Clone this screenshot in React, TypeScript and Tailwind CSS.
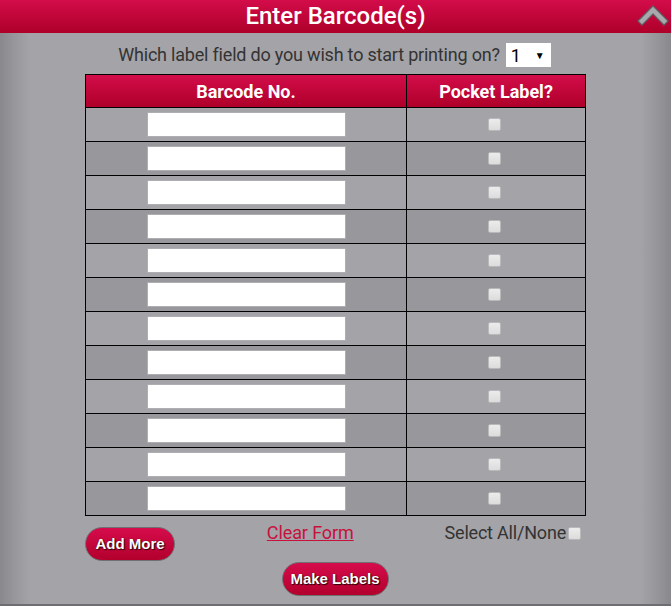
import React from "react";

const rows = Array.from({ length: 12 }, (_, i) => i);

function Check({ className = "" }: { className?: string }) {
  return (
    <span
      className={
        "inline-block w-[13px] h-[13px] rounded-[2px] border border-[#b9b9bc] bg-[linear-gradient(#ececec,#dcdcdc)] " +
        className
      }
    />
  );
}

function RedButton({ children, className = "" }: { children: React.ReactNode; className?: string }) {
  return (
    <button
      className={
        "h-[34px] rounded-full border border-[#6f6f74] bg-[linear-gradient(#d60c4c,#b2002c)] text-white text-[15px] font-bold [font-family:'Liberation_Sans',Arial,sans-serif] [text-shadow:1px_1px_1px_#2a0008,0_0_1px_#2a0008] " +
        className
      }
    >
      {children}
    </button>
  );
}

export default function App() {
  return (
    <div className="w-[671px] h-[606px] overflow-hidden relative bg-[linear-gradient(to_right,#89888d_0px,#97969b_14px,#a4a3a8_30px,#a4a3a8_640px,#97969b_656px,#89888d_671px)] [font-family:Roboto,'Liberation_Sans',sans-serif] text-[#333]">
      {/* Header */}
      <div className="relative h-[33px] bg-[linear-gradient(#d30c4a,#ae0029)] flex items-center justify-center">
        <span className="text-white text-[24px] font-medium leading-none pb-[1px]">Enter Barcode(s)</span>
        <svg className="absolute right-0 top-0" width="40" height="33" viewBox="0 0 40 33">
          <polyline points="11,21 22,10 33,21" fill="none" stroke="#5e5e62" strokeWidth="7" strokeLinecap="square" strokeLinejoin="miter" />
          <polyline points="11,21 22,10 33,21" fill="none" stroke="#a9a9ad" strokeWidth="4.5" strokeLinecap="square" strokeLinejoin="miter" />
        </svg>
      </div>

      {/* Select line */}
      <div className="mt-[10px] flex items-center justify-center gap-[6px] ml-[-2px]">
        <span className="text-[18px] leading-[24px] tracking-[-0.2px]">Which label field do you wish to start printing on?</span>
        <div className="w-[45px] h-[24px] bg-white flex items-center justify-between pl-[5px] pr-[6px] text-[18px] text-black">
          <span>1</span>
          <span className="text-[10px]">▼</span>
        </div>
      </div>

      {/* Table */}
      <div className="mx-auto mt-[7px] w-[501px] border border-black">
        <div className="flex h-[32px] bg-[linear-gradient(#d30c4a,#ae0029)] text-white text-[18px] font-bold">
          <div className="w-[321px] border-r border-black flex items-center justify-center">Barcode No.</div>
          <div className="flex-1 flex items-center justify-center">Pocket Label?</div>
        </div>
        {rows.map((i) => (
          <div
            key={i}
            className={
              "flex h-[34px] border-t border-black " + (i % 2 === 0 ? "bg-[#a4a3a8]" : "bg-[#98979c]")
            }
          >
            <div className="w-[321px] border-r border-black flex items-center pl-[61px]">
              <div className="w-[199px] h-[25px] bg-white border border-[#aeadb1]" />
            </div>
            <div className="flex-1 flex items-center justify-center pr-[4px] pb-[1px]">
              <Check />
            </div>
          </div>
        ))}
      </div>

      {/* Bottom controls */}
      <div className="mx-auto w-[501px] h-[45px] flex items-start justify-between pr-[5px]">
        <RedButton className="mt-[11px] w-[90px]">Add More</RedButton>
        <a className="mt-[6px] ml-[1px] text-[18px] leading-[21px] tracking-[-0.1px] text-[#c8103e] underline">Clear Form</a>
        <div className="mt-[6px] flex items-start">
          <span className="text-[18px] leading-[21px] tracking-[-0.2px]">Select All/None</span>
          <Check className="ml-[2px] mt-[5px]" />
        </div>
      </div>
      <div className="mt-[1px] flex justify-center">
        <RedButton className="w-[107px] ml-[-1px]">Make Labels</RedButton>
      </div>

      <div className="absolute left-0 bottom-0 w-full h-[2px] bg-[#6e6e72]" />
    </div>
  );
}
